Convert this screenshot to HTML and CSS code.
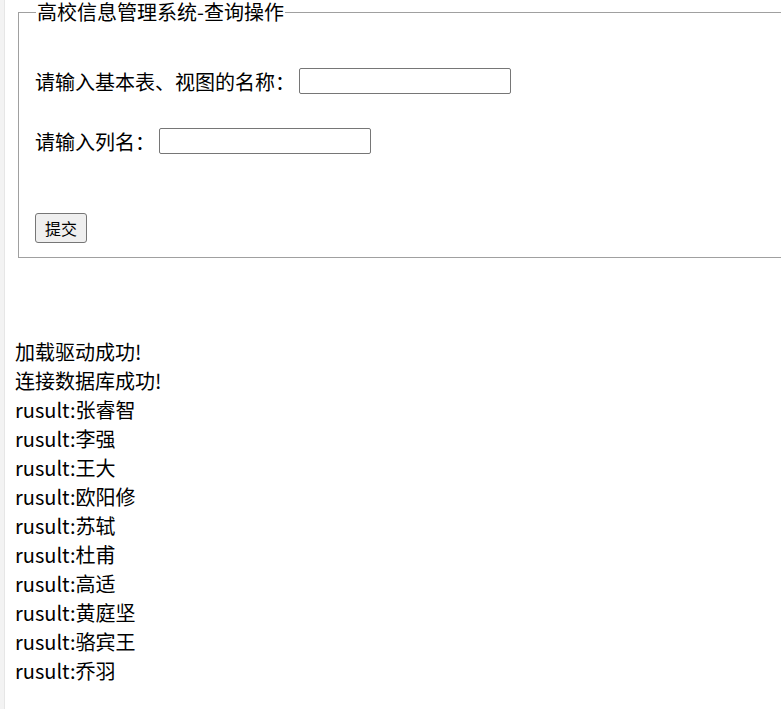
FILE: index.html
```html
<!DOCTYPE html>
<html lang="zh-CN">
<head>
    <meta charset="UTF-8">
    <meta name="viewport" content="width=device-width, initial-scale=1.0">
    <title>高校信息管理系统</title>
    <link rel="stylesheet" href="styles.css">
</head>
<body>
    <div class="page">
        <form class="query-form" action="#" method="post">
            <fieldset>
                <legend>高校信息管理系统-查询操作</legend>
                <div class="row row-first">
                    <label for="tname">请输入基本表、视图的名称：</label>
                    <input type="text" id="tname" name="tname">
                </div>
                <div class="row">
                    <label for="cname">请输入列名：</label>
                    <input type="text" id="cname" name="cname">
                </div>
                <div class="actions">
                    <button type="submit" class="submit-btn">提交</button>
                </div>
            </fieldset>
        </form>

        <!-- output from the query -->
        <div class="result">
            <div>加载驱动成功!</div>
            <div>连接数据库成功!</div>
            <div>rusult:张睿智</div>
            <div>rusult:李强</div>
            <div>rusult:王大</div>
            <div>rusult:欧阳修</div>
            <div>rusult:苏轼</div>
            <div>rusult:杜甫</div>
            <div>rusult:高适</div>
            <div>rusult:黄庭坚</div>
            <div>rusult:骆宾王</div>
            <div>rusult:乔羽</div>
        </div>
    </div>
</body>
</html>
```

FILE: styles.css
```css
html, body {
    margin: 0;
    overflow: hidden;
    background-color: #fff;
}

body {
    font-family: "Noto Sans CJK SC", "Noto Sans", sans-serif;
    color: #000;
}

.page {
    min-height: 100vh;
    border-left: 4px solid #f3f3f3;
    box-shadow: inset 1px 0 0 #e6e6e6;
    padding-left: 11px;
}

.query-form {
    margin: 0 0 0 1px;
}

fieldset {
    width: 820px;
    margin: 0 2px;
    padding: 0 15px 14px 16px;
    border: 1px solid #a0a0a0;
    border-right: none;
    font-size: 20px;
}

legend {
    padding: 0 1px;
    line-height: 24px;
    margin-left: 1px;
}

.row {
    display: flex;
    align-items: center;
    height: 26px;
    margin-top: 34px;
}

.row-first {
    margin-top: 44px;
}

.row label {
    margin-right: 4px;
}

.row input {
    width: 212px;
    height: 26px;
    box-sizing: border-box;
    border: 1px solid #767676;
    border-radius: 2px;
    padding: 1px 2px;
    font-size: 13px;
}

.actions {
    margin-top: 59px;
}

.submit-btn {
    width: 52px;
    height: 30px;
    padding: 0;
    font-family: "Noto Sans CJK SC", sans-serif;
    font-size: 16px;
    background-color: #efefef;
    border: 1px solid #767676;
    border-radius: 3px;
    color: #000;
    display: block;
}

.result {
    margin-top: 79px;
    font-size: 20px;
    line-height: 29px;
}
```
